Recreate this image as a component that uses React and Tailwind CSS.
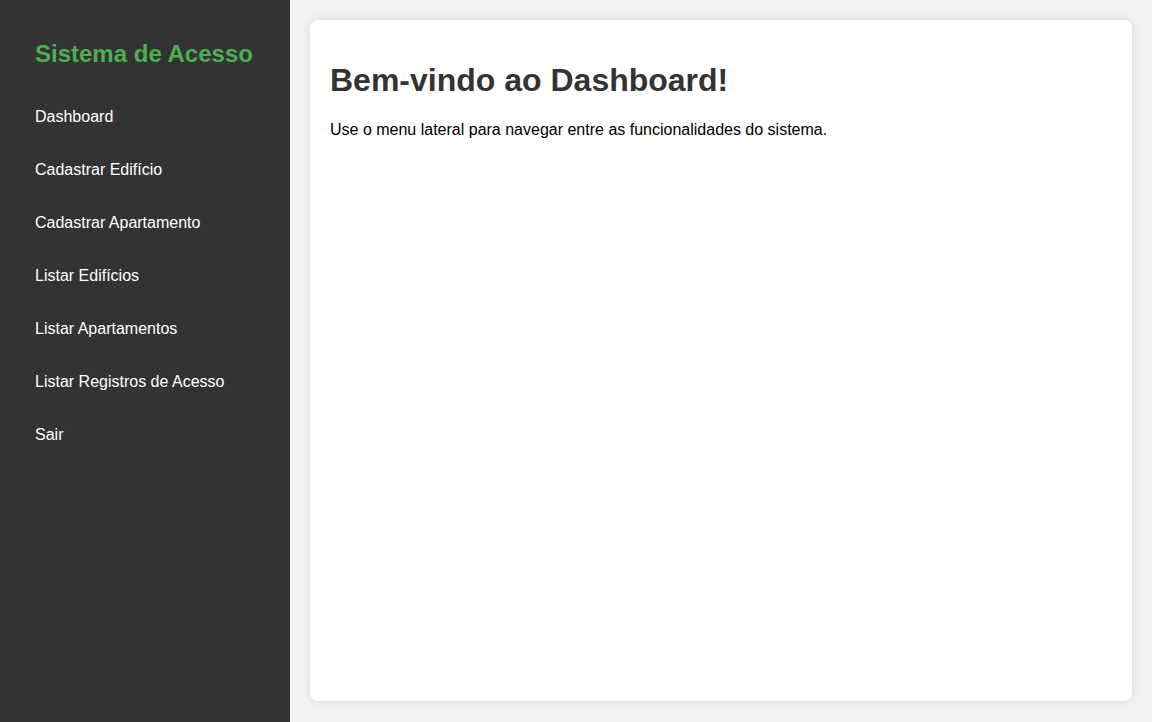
import React from 'react';

const links = [
  'Dashboard',
  'Cadastrar Edifício',
  'Cadastrar Apartamento',
  'Listar Edifícios',
  'Listar Apartamentos',
  'Listar Registros de Acesso',
  'Sair',
];

export default function App() {
  return (
    <div className="flex h-[722px] w-full bg-[#f2f2f2] font-['Liberation_Sans',Arial,sans-serif]">
      {/* Sidebar */}
      <aside className="w-[290px] shrink-0 bg-[#333333] px-[35px] pt-[40px]">
        <h2 className="text-[24px] leading-[28px] font-bold text-[#4caf50]">Sistema de Acesso</h2>
        <ul className="mt-[22px]">
          {links.map(l => (
            <li key={l} className="h-[53px] flex items-center">
              <a href="#" className="text-[16px] text-white">{l}</a>
            </li>
          ))}
        </ul>
      </aside>

      {/* Main */}
      <main className="flex-1 pt-5 px-5 pb-[21px]">
        <div className="h-full bg-white rounded-lg shadow-[0_0_10px_rgba(0,0,0,0.1)] px-5 pt-[42px]">
          <h1 className="text-[32px] leading-[37px] font-bold text-[#333333]">Bem-vindo ao Dashboard!</h1>
          <p className="mt-[21px] text-[16px] leading-[19px] text-black">
            Use o menu lateral para navegar entre as funcionalidades do sistema.
          </p>
        </div>
      </main>
    </div>
  );
}
